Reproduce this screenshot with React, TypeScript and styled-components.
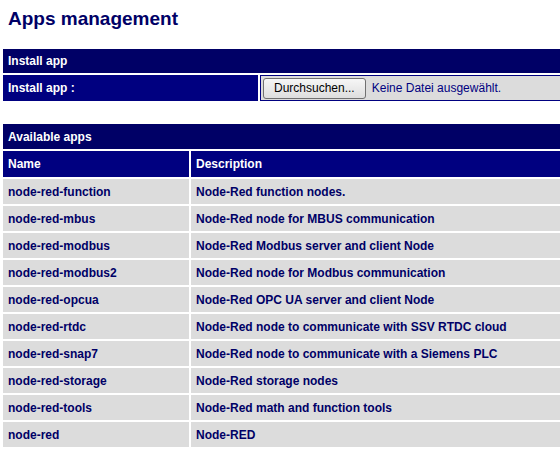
import styled, { createGlobalStyle } from "styled-components";

const GlobalStyle = createGlobalStyle`
  html, body {
    margin: 0;
    padding: 0;
    background: #ffffff;
    font-family: "Liberation Sans", Arial, sans-serif;
  }
`;

const Page = styled.div`
  padding: 8px 0 0 1px;
  overflow: hidden;
`;

const Title = styled.h1`
  margin: 0 0 17px 7px;
  font-size: 19px;
  line-height: 22px;
  font-weight: bold;
  color: #000066;
`;

const Table = styled.table<{ $gap?: number }>`
  width: calc(100% + 4px);
  border-collapse: separate;
  border-spacing: 2px;
  margin-bottom: ${(p) => p.$gap ?? 0}px;
  font-size: 12px;
`;

const SectionCell = styled.th<{ $height?: number }>`
  height: ${(p) => p.$height ?? 24}px;
  padding: 0 5px;
  background: #000066;
  color: #ffffff;
  font-weight: bold;
  text-align: left;
`;

const HeadCell = styled.th<{ $width?: number; $height?: number }>`
  width: ${(p) => (p.$width ? `${p.$width}px` : "auto")};
  height: ${(p) => p.$height ?? 26}px;
  padding: 0 5px;
  box-sizing: border-box;
  background: #000080;
  color: #ffffff;
  font-weight: bold;
  text-align: left;
`;

const FileCell = styled.td`
  height: 26px;
  padding: 0 0 0 2px;
  box-sizing: border-box;
  background: #dcdcdc;
  border-top: 1px solid #000080;
  border-bottom: 1px solid #000080;
  border-left: 1px solid #000080;
`;

const FileField = styled.div`
  display: flex;
  align-items: center;
  gap: 6px;
`;

const BrowseButton = styled.button`
  height: 21px;
  padding: 0 10px;
  border: 1px solid #707070;
  border-radius: 3px;
  background: linear-gradient(#f6f6f6, #dedede);
  color: #000000;
  font-family: "Liberation Sans", Arial, sans-serif;
  font-size: 12px;
`;

const FileStatus = styled.span`
  color: #000080;
  font-size: 12px;
`;

const DataCell = styled.td`
  height: 25px;
  padding: 0 5px;
  box-sizing: border-box;
  background: #dcdcdc;
  color: #000066;
  font-weight: bold;
`;

const apps = [
  { name: "node-red-function", description: "Node-Red function nodes." },
  { name: "node-red-mbus", description: "Node-Red node for MBUS communication" },
  { name: "node-red-modbus", description: "Node-Red Modbus server and client Node" },
  { name: "node-red-modbus2", description: "Node-Red node for Modbus communication" },
  { name: "node-red-opcua", description: "Node-Red OPC UA server and client Node" },
  { name: "node-red-rtdc", description: "Node-Red node to communicate with SSV RTDC cloud" },
  { name: "node-red-snap7", description: "Node-Red node to communicate with a Siemens PLC" },
  { name: "node-red-storage", description: "Node-Red storage nodes" },
  { name: "node-red-tools", description: "Node-Red math and function tools" },
  { name: "node-red", description: "Node-RED" },
];

function App() {
  return (
    <Page>
      <GlobalStyle />
      <Title>Apps management</Title>

      <Table $gap={19}>
        <thead>
          <tr>
            <SectionCell colSpan={2}>Install app</SectionCell>
          </tr>
        </thead>
        <tbody>
          <tr>
            <HeadCell $width={255}>Install app :</HeadCell>
            <FileCell>
              <FileField>
                <BrowseButton type="button">Durchsuchen...</BrowseButton>
                <FileStatus>Keine Datei ausgewählt.</FileStatus>
              </FileField>
            </FileCell>
          </tr>
        </tbody>
      </Table>

      <Table>
        <thead>
          <tr>
            <SectionCell colSpan={2} $height={25}>
              Available apps
            </SectionCell>
          </tr>
          <tr>
            <HeadCell $width={186}>Name</HeadCell>
            <HeadCell>Description</HeadCell>
          </tr>
        </thead>
        <tbody>
          {apps.map((app) => (
            <tr key={app.name}>
              <DataCell>{app.name}</DataCell>
              <DataCell>{app.description}</DataCell>
            </tr>
          ))}
        </tbody>
      </Table>
    </Page>
  );
}

export default App;
